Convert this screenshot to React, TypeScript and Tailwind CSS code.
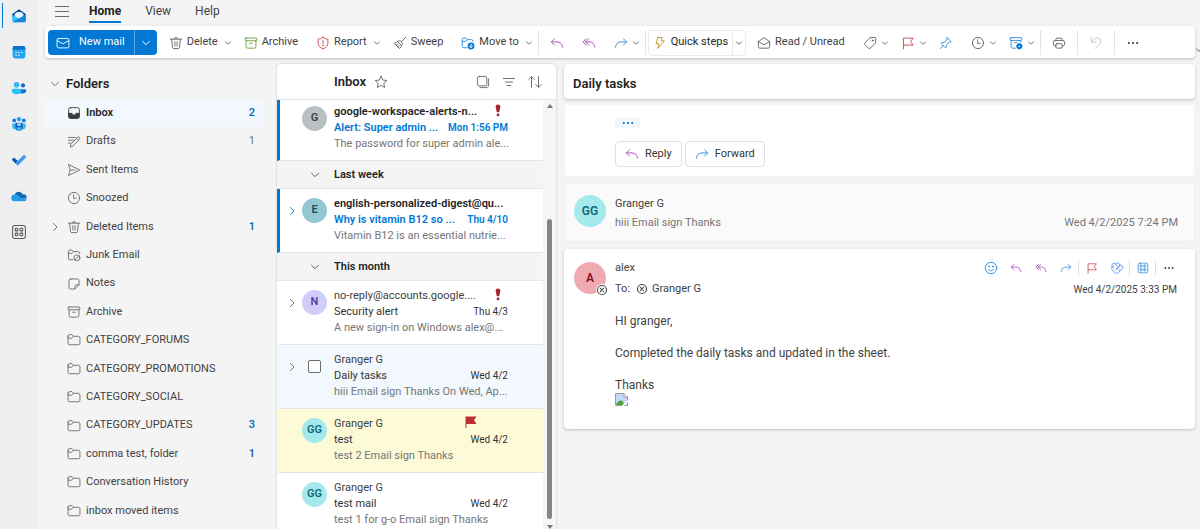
import type { ReactNode } from 'react';
import clsx from 'clsx';

type IconProps = { className?: string; children?: ReactNode; size?: 'sm' | 'md' | 'lg' };

// Outline icons share a 20x20 grid and take their colour from the text
const Icon = ({ className, children, size = 'md' }: IconProps) => (
    <svg
        viewBox="0 0 20 20"
        fill="none"
        stroke="currentColor"
        strokeWidth={1.3}
        strokeLinecap="round"
        strokeLinejoin="round"
        aria-hidden="true"
        className={clsx(
            'shrink-0',
            size === 'sm' && 'h-3 w-3',
            size === 'md' && 'h-3.5 w-3.5',
            size === 'lg' && 'h-4 w-4',
            className
        )}
    >
        {children}
    </svg>
);

const Chevron = ({ className }: { className?: string }) => (
    <svg viewBox="0 0 8 8" fill="none" stroke="currentColor" strokeLinecap="round" strokeLinejoin="round" aria-hidden="true" className={clsx('h-2 w-2 shrink-0', className)}>
        <path d="M1.5 2.8 4 5.3l2.5-2.5" />
    </svg>
);

const ChevronRight = ({ className }: { className?: string }) => (
    <svg viewBox="0 0 10 10" fill="none" stroke="currentColor" strokeLinecap="round" strokeLinejoin="round" aria-hidden="true" className={clsx('h-[10px] w-[10px] shrink-0', className)}>
        <path d="m3.5 1.5 3.5 3.5-3.5 3.5" />
    </svg>
);

const ChevronDown = ({ className }: { className?: string }) => (
    <svg viewBox="0 0 10 10" fill="none" stroke="currentColor" strokeLinecap="round" strokeLinejoin="round" aria-hidden="true" className={clsx('h-[10px] w-[10px] shrink-0', className)}>
        <path d="m1.5 3.2 3.5 3.5 3.5-3.5" />
    </svg>
);

const icons = {
    mail: <><rect x="1.5" y="3.5" width="17" height="13.5" rx="2.2" /><path d="m1.8 6.8 8.2 4.400 8.200-4.400" /></>,
    trash: <path d="M2 4.5h16M7.8 4.3a2.2 2.2 0 0 1 4.4 0M3.8 4.7l1.2 11.6A2 2 0 0 0 7 18h6a2 2 0 0 0 2-1.7l1.2-11.6M8.4 8v6.3M11.6 8v6.3" />,
    archive: <><rect x="1.8" y="2.8" width="16.4" height="4" rx="1" /><path d="M3 6.8v8.4a2.2 2.2 0 0 0 2.2 2.2h9.600a2.200 2.200 0 0 0 2.200-2.200V6.800M8 10.300h4" /></>,
    report: <><path d="M10 1.800c2 1.600 4.400 2.500 7 2.600v5.400c0 4-2.600 6.900-7 8.500-4.400-1.600-7-4.500-7-8.500V4.400c2.600-.1 5-1 7-2.600ZM10 6v5" /><circle cx="10" cy="13.600" r=".5" fill="currentColor" /></>,
    sweep: <path d="m18.300 1.700-6 6M6.500 7.800c2-1.400 4.200-1.400 5.700.1s1.600 3.800.1 5.800c-.9 1.500-1.700 2.700-2.600 4.300L2 10.400c1.800-.6 3-1.500 4.500-2.600Zm0 0 5.800 5.900M4.700 13.100l2-1M7.200 15.600l1.400-1.500" />,
    moveTo: <><path d="M8.500 16.800H4A2.200 2.200 0 0 1 1.800 14.600V5A2.200 2.200 0 0 1 4 2.800h3l2.400 2.400H15A2.200 2.200 0 0 1 17.200 7.400V8M1.800 7.700h4.600L9.400 5.200" /><circle cx="14.300" cy="14.300" r="4.900" fill="#0078d4" stroke="none" /><path d="M14.300 11.800v4.600m-2-2 2 2 2-2" stroke="#fff" /></>,
    reply: <path d="M6.500 4 2 8.500 6.500 13M2.300 8.500H10c4.500 0 7.300 2.600 8 7.500" />,
    replyAll: <path d="M9.500 4 5 8.500 9.500 13M6 4 1.500 8.500 6 13M5.300 8.500H11c4 0 6.600 2.600 7.300 7.500" />,
    forward: <path d="M13.500 4 18 8.500 13.500 13M17.700 8.500H10c-4.500 0-7.300 2.600-8 7.500" />,
    bolt: <path d="M7 2h6.500l-2 5h4.800L6.500 18l2-7H4.300L7 2Z" />,
    openMail: <path d="m2 8 8-5.700L18 8v7.200a2.200 2.200 0 0 1-2.200 2.200H4.200A2.200 2.200 0 0 1 2 15.200V8Zm.3.300L10 12.500l7.700-4.200" />,
    tag: <><path d="M10.800 2.400 17 2a1.400 1.400 0 0 1 1.400 1.400l-.6 6.200a2 2 0 0 1-.6 1.200l-6.600 6.600a2 2 0 0 1-2.800 0l-5-5a2 2 0 0 1 0-2.800L9.500 3a2 2 0 0 1 1.300-.6Z" /><circle cx="14" cy="6.300" r=".8" /></>,
    flag: <path d="M3.500 18.500V3h13.800l-3.600 5 3.600 5H3.500" />,
    pin: <path d="m11.800 2.500 5.700 5.700-1 1-2-.2-3.700 3.400-.4 3.600-1 1-6.400-6.400 1-1 3.600-.4L11 5.500l-.2-2 1-1ZM6.200 13.800 2 18" />,
    clock: <><circle cx="10" cy="10" r="8" /><path d="M9.500 5.500v5H13" /></>,
    archiveGear: <><rect x="1.800" y="2.300" width="16.400" height="4" rx=".8" /><path d="M3 6.300v8.900a2.200 2.200 0 0 0 2.200 2.200H9M17 6.300V8.500M8 9.300h3" /><circle cx="14.800" cy="14.600" r="3.200" fill="#0078d4" stroke="#0078d4" strokeDasharray="1.900 1.400" strokeWidth="2.400" /><circle cx="14.800" cy="14.600" r="1.200" fill="#fff" stroke="none" /></>,
    print: <><path d="M5.500 6.500V4.800A1.800 1.800 0 0 1 7.300 3h5.400a1.800 1.800 0 0 1 1.800 1.800v1.700M5.500 14H4a2 2 0 0 1-2-2V8.800a2.300 2.300 0 0 1 2.300-2.300h11.400A2.300 2.300 0 0 1 18 8.800V12a2 2 0 0 1-2 2h-1.500" /><rect x="5.500" y="11" width="9" height="6.300" rx="1.600" /></>,
    undo: <path d="M3.500 2.500v6.300h6.300M3.800 8.500l4.400-4.300a5 5 0 0 1 7.200 7L9 17.800" />,
    inbox: <><rect x="2.300" y="2.300" width="15.400" height="15.400" rx="2.800" /><path d="M2.500 10.500h4.700c.3 1.500 1.300 2.500 2.800 2.500s2.500-1 2.800-2.500h4.700v4.300a2.700 2.700 0 0 1-2.700 2.700H5.200a2.700 2.700 0 0 1-2.700-2.700v-4.300Z" fill="currentColor" /></>,
    drafts: <path d="M2 3.500h10M2 7.500h7.500M2 11.500h4M15 3.300a1.900 1.900 0 0 1 2.800 2.700L8.500 15.700l-4 1.500 1.300-4.200L15 3.300ZM13.500 5l2.700 2.600" />,
    send: <path d="M2.200 2.200 18.300 10 2.200 17.800 4.500 10 2.200 2.200ZM4.700 10h7" />,
    junk: <><path d="M8.500 16.800H4.200A2.200 2.200 0 0 1 2 14.600V5a2.200 2.200 0 0 1 2.200-2.200h2.900l2.400 2.400h6.300A2.200 2.200 0 0 1 18 7.400V8M2 7.700h4.600l2.900-2.500" /><circle cx="14.200" cy="14" r="4.300" /><path d="m11.300 17 5.900-5.900" /></>,
    note: <path d="M5.300 2.800h9.400a2.500 2.500 0 0 1 2.500 2.500v5.900L11.200 17.200H5.300a2.500 2.500 0 0 1-2.500-2.500V5.300a2.500 2.500 0 0 1 2.500-2.500Zm5.900 14.200v-3.300a2.500 2.500 0 0 1 2.500-2.500H17" />,
    folder: <path d="M1.500 4.500a2.200 2.200 0 0 1 2.200-2.200h3.400l2.400 2.400h6.800a2.200 2.200 0 0 1 2.200 2.200v7.700a2.200 2.200 0 0 1-2.200 2.200H3.700a2.200 2.200 0 0 1-2.200-2.200V4.500Zm0 2.900h5.100l2.900-2.700" />,
    star: <path d="m10 1.800 2.500 5.400 5.800.7-4.300 4 1.200 5.900L10 14.900l-5.200 2.900L6 11.900l-4.300-4 5.800-.7L10 1.800Z" />,
    select: <><rect x="2" y="2" width="13.500" height="13.500" rx="2.800" /><path d="M18 5.500v8.700a3.800 3.800 0 0 1-3.800 3.800H5.500" /></>,
    filter: <path d="M2 5h16M5 10h10M7.500 15h5" />,
    sort: <path d="M5 17.500V2.500M1 6.500l4-4 4 4M15 2.500v15M11 13.500l4 4 4-4" />,
    smile: <><circle cx="10" cy="10" r="8.200" /><path d="M6.300 12c1 1.400 2.200 2 3.700 2s2.700-.6 3.700-2" /><circle cx="7.200" cy="7.800" r=".8" fill="currentColor" /><circle cx="12.800" cy="7.800" r=".8" fill="currentColor" /></>,
    loop: <path d="m5.500 10.500-2-2a3 3 0 0 1 0-4.200 3 3 0 0 1 4.200 0l5.300 5.300M7.500 5 9 3.300a3 3 0 0 1 4.200 4.200L8 12.700M13.300 6.700a3 3 0 0 1 4.300 4.300l-6 6a3 3 0 0 1-4.200 0l-4.500-4.500a3 3 0 0 1 2-5M10 10l3.500 3.500" />,
    appGrid: <><rect x="2" y="2" width="16" height="16" rx="2.600" /><rect x="5.300" y="5.300" width="3.300" height="3.300" rx=".6" /><rect x="11.400" y="5.300" width="3.300" height="3.300" rx=".6" /><rect x="5.300" y="11.400" width="3.300" height="3.300" rx=".6" /><rect x="11.400" y="11.400" width="3.300" height="3.300" rx=".6" /></>,
    dots: <g fill="currentColor" stroke="none"><circle cx="4" cy="10" r="1.500" /><circle cx="10" cy="10" r="1.500" /><circle cx="16" cy="10" r="1.500" /></g>,
    presence: <><circle cx="10" cy="10" r="7.500" strokeWidth="2" /><path d="m7.300 7.300 5.400 5.400m0-5.400-5.400 5.400" strokeWidth="2.200" /></>,
};

type IconName = keyof typeof icons;

// ---- App rail ----

const railApps: { label: string; art: ReactNode }[] = [
    {
        label: 'Mail',
        art: (
            <>
                <path d="M1.500 7.500 10 1.500l8.500 6v4h-17v-4Z" fill="#0a4a9c" />
                <path d="m4.500 7.500 3-2.500h5l3 2.500v5h-11z" fill="#e8f4ff" />
                <path d="M1.500 8.300 10 13l8.500-4.700v7.200a2.300 2.300 0 0 1-2.300 2.300H3.800a2.300 2.300 0 0 1-2.300-2.300V8.300Z" fill="#35c3f5" />
                <path d="M18.500 8.300v7.200a2.300 2.300 0 0 1-2.300 2.300H3.800c-.6 0-1.100-.2-1.500-.6l16.200-8.900Z" fill="#1683de" />
            </>
        ),
    },
    {
        label: 'Calendar',
        art: (
            <>
                <rect x="2" y="2.500" width="16" height="15.500" rx="3" fill="#22a5f1" />
                <path d="M5 2.500h10a3 3 0 0 1 3 3v1.300H2V5.500a3 3 0 0 1 3-3Z" fill="#0f6cc9" />
                <g fill="#fff"><circle cx="6.300" cy="10.500" r=".9" /><circle cx="10" cy="10.500" r=".9" /><circle cx="13.700" cy="10.500" r=".9" /><circle cx="6.300" cy="14" r=".9" /><circle cx="10" cy="14" r=".9" /></g>
            </>
        ),
    },
    {
        label: 'People',
        art: (
            <>
                <circle cx="7" cy="6" r="3.500" fill="#33b6f4" />
                <circle cx="15" cy="6.800" r="2.600" fill="#0f6cc9" />
                <path d="M11 11.500h6.500A1.500 1.500 0 0 1 19 13c0 2.300-1.700 3.800-4.200 3.800H11v-5.300Z" fill="#0f78d4" />
                <path d="M3 11h8a2 2 0 0 1 2 2c0 3-2.300 4.700-6 4.700S1 16 1 13a2 2 0 0 1 2-2Z" fill="#2fbdf3" />
            </>
        ),
    },
    {
        label: 'Groups',
        art: (
            <>
                <circle cx="4" cy="5.500" r="2.300" fill="#1179d3" /><circle cx="16" cy="5.500" r="2.300" fill="#1179d3" /><circle cx="10" cy="4" r="2.700" fill="#1da1f0" />
                <path d="M1.500 9.500H6v7.300a4.500 4.500 0 0 1-4.500-4V9.500ZM14 9.500h4.500v3.300a4.500 4.500 0 0 1-4.500 4V9.500Z" fill="#35b8f5" />
                <path d="M5.500 8.500h9V14a4.500 4.500 0 0 1-9 0V8.500Z" fill="#0d5fbd" />
                <circle cx="10" cy="10.500" r="2.300" fill="#8ad8fb" />
                <path d="M7 14h6v1.500a3 3 0 0 1-6 0V14Z" fill="#35b8f5" />
            </>
        ),
    },
    {
        label: 'To Do',
        art: (
            <>
                <path d="m1 9.700 2.900-2.900 4.800 4.800-2.900 2.900L1 9.700Z" fill="#174fae" />
                <path d="m5.300 14 11-10.600 2.900 2.900L8.500 17.300 5.300 14Z" fill="#3a9cf0" />
            </>
        ),
    },
    {
        label: 'OneDrive',
        art: (
            <>
                <path d="M4.500 8.500A5.600 5.600 0 0 1 14.800 8a4.600 4.600 0 0 1 5 4.300l-6 1L4.500 8.500Z" fill="#1267b4" />
                <path d="M4.800 8.300a4 4 0 0 0-.6 8.300h12a3.700 3.700 0 0 0 3.500-3.300c-2-.8-4.200-.6-5.700.2L8.700 9.500a5 5 0 0 0-3.900-1.200Z" fill="#239cea" />
            </>
        ),
    },
];

const AppRail = () => (
    <nav aria-label="Apps" className="flex w-[39px] shrink-0 flex-col gap-[11px] bg-[#efefef] pt-[3px]">
        {railApps.map((app, index) => (
            <button
                key={app.label}
                aria-label={app.label}
                className={clsx('mx-0.5 flex h-[25px] items-center justify-center border-l pr-0.5', index === 0 ? 'border-[#0078d4]' : 'border-transparent')}
            >
                <svg viewBox="0 0 20 20" className="h-4 w-4" aria-hidden="true">{app.art}</svg>
            </button>
        ))}
        <button aria-label="More apps" className="mx-0.5 flex h-[25px] items-center justify-center pr-px text-[#5c5c5c]">
            <Icon size="lg">{icons.appGrid}</Icon>
        </button>
    </nav>
);

// ---- Ribbon ----

type ToolProps = { icon: IconName; label: string; text?: boolean; menu?: boolean; color?: string };

const Tool = ({ icon, label, text = false, menu = false, color = 'text-[#616161]' }: ToolProps) => (
    <button aria-label={label} className={clsx('flex h-[26px] shrink-0 items-center gap-1 pl-[9px]', menu ? 'pr-[3px]' : 'pr-[9px]')}>
        <Icon className={color}>{icons[icon]}</Icon>
        {text && <span>{label}</span>}
        {menu && <Chevron className={clsx('text-[#767676]', text && 'ml-0.5')} />}
    </button>
);

const Divider = () => <span className="mx-0.5 h-[25px] w-px shrink-0 bg-[#e4e4e4]" />;

const Ribbon = () => (
    <header>
        <div className="flex h-[23px] items-center gap-6 pl-4 text-xs">
            <button aria-label="Navigation" className="-mr-1 text-[#6b6b6b]">
                <svg viewBox="0 0 14 11" className="h-[11px] w-[14px]" stroke="currentColor" aria-hidden="true"><path d="M0 .5h14M0 5.500h14M0 10.500h14" /></svg>
            </button>
            <button className="flex h-full items-center border-b-2 border-[#0078d4] pt-px font-bold text-[#242424]">Home</button>
            <button className="flex h-full items-center border-b-2 border-transparent pt-px">View</button>
            <button className="flex h-full items-center border-b-2 border-transparent pt-px">Help</button>
        </div>
        <div role="toolbar" aria-label="Ribbon" className="relative mt-[3px] mr-[5px] ml-1.5 flex h-8 items-center rounded-sm bg-white px-[3px] pt-px shadow-[0_1px_3px_rgba(0,0,0,0.22)]">
            <div className="mr-[3px] flex h-[25px] shrink-0 rounded-sm bg-[#0078d4] text-white">
                <button className="flex items-center gap-[9px] border-r border-[#5aa9e4] pr-[9px] pl-2">
                    <Icon>{icons.mail}</Icon>
                    New mail
                </button>
                <button aria-label="New mail options" className="flex w-[22px] items-center justify-center">
                    <ChevronDown />
                </button>
            </div>
            <Tool icon="trash" label="Delete" text menu />
            <Tool icon="archive" label="Archive" text color="text-[#6a9f3f]" />
            <Tool icon="report" label="Report" text menu color="text-[#c4454f]" />
            <Tool icon="sweep" label="Sweep" text />
            <Tool icon="moveTo" label="Move to" text menu color="text-[#2b88d8]" />
            <Divider />
            <Tool icon="reply" label="Reply" color="text-[#a846b8]" />
            <Tool icon="replyAll" label="Reply all" color="text-[#a846b8]" />
            <Tool icon="forward" label="Forward" menu color="text-[#2b88d8]" />
            <Divider />
            <div className="mr-0.5 flex h-[26px] shrink-0 rounded-sm border border-[#ebebeb] text-[#242424]">
                <button className="flex items-center gap-1 border-r border-[#ebebeb] px-1">
                    <Icon className="text-[#b8912a]">{icons.bolt}</Icon>
                    Quick steps
                </button>
                <button aria-label="Quick steps options" className="flex w-3 items-center justify-center text-[#616161]">
                    <Chevron />
                </button>
            </div>
            <Tool icon="openMail" label="Read / Unread" text />
            <Tool icon="tag" label="Categorize" menu />
            <Tool icon="flag" label="Flag" menu color="text-[#c4454f]" />
            <Tool icon="pin" label="Pin" color="text-[#2b88d8]" />
            <Tool icon="clock" label="Snooze" menu />
            <Tool icon="archiveGear" label="Policy" menu color="text-[#2b88d8]" />
            <Divider />
            <Tool icon="print" label="Print" />
            <Divider />
            <Tool icon="undo" label="Undo" color="text-[#c4c4c4]" />
            <Divider />
            <Tool icon="dots" label="More options" color="text-[#333333]" />
            <Chevron className="absolute -right-2 bottom-1 text-[#616161]" />
        </div>
    </header>
);

// ---- Folder pane ----

type Folder = { name: string; icon: IconName; count?: number; muted?: boolean; expandable?: boolean };

const folders: Folder[] = [
    { name: 'Inbox', icon: 'inbox', count: 2 },
    { name: 'Drafts', icon: 'drafts', count: 1, muted: true },
    { name: 'Sent Items', icon: 'send' },
    { name: 'Snoozed', icon: 'clock' },
    { name: 'Deleted Items', icon: 'trash', count: 1, expandable: true },
    { name: 'Junk Email', icon: 'junk' },
    { name: 'Notes', icon: 'note' },
    { name: 'Archive', icon: 'archive' },
    { name: 'CATEGORY_FORUMS', icon: 'folder' },
    { name: 'CATEGORY_PROMOTIONS', icon: 'folder' },
    { name: 'CATEGORY_SOCIAL', icon: 'folder' },
    { name: 'CATEGORY_UPDATES', icon: 'folder', count: 3 },
    { name: 'comma test, folder', icon: 'folder', count: 1 },
    { name: 'Conversation History', icon: 'folder' },
    { name: 'inbox moved items', icon: 'folder' },
];

const FolderPane = () => (
    <nav aria-label="Folders" className="flex w-[218px] shrink-0 flex-col pt-[5px] pb-1">
        <button className="flex h-[30px] shrink-0 items-center gap-1.5 pl-[5px] text-[13px] font-semibold text-[#242424]">
            <ChevronDown className="text-[#767676]" />
            Folders
        </button>
        <ul className="flex min-h-0 flex-1 flex-col">
            {folders.map((folder, index) => (
                <li key={folder.name} className="flex max-h-8 flex-1">
                    <a href="#" className={clsx('flex flex-1 items-center pr-2 pl-[5px]', index === 0 && 'rounded-sm bg-[#f2f8fd] text-[#242424]')}>
                        <span className="flex w-[17px] shrink-0 text-[#767676]">{folder.expandable && <ChevronRight />}</span>
                        <Icon className={index === 0 ? 'text-[#3b3b3b]' : 'text-[#6b6b6b]'}>{icons[folder.icon]}</Icon>
                        <span className={clsx('ml-[5px] flex-1', index === 0 && 'font-semibold')}>{folder.name}</span>
                        {folder.count && (
                            <span className={folder.muted ? 'text-[#767676]' : 'font-semibold text-[#0f6cbd]'}>{folder.count}</span>
                        )}
                    </a>
                </li>
            ))}
        </ul>
    </nav>
);

// ---- Message list ----

type Message = {
    from: string;
    subject: string;
    preview: string;
    date: string;
    initials?: string;
    avatar?: string;
    unread?: boolean;
    expandable?: boolean;
    selected?: boolean;
    flagged?: boolean;
    important?: boolean;
};

const groups: { title?: string; messages: Message[] }[] = [
    {
        messages: [
            { from: 'google-workspace-alerts-n...', subject: 'Alert: Super admin ...', preview: 'The password for super admin ale...', date: 'Mon 1:56 PM', initials: 'G', avatar: 'bg-[#b9c0c4] text-[#3c4043]', unread: true, important: true },
        ],
    },
    {
        title: 'Last week',
        messages: [
            { from: 'english-personalized-digest@qu...', subject: 'Why is vitamin B12 so ...', preview: 'Vitamin B12 is an essential nutrie...', date: 'Thu 4/10', initials: 'E', avatar: 'bg-[#93c7d3] text-[#134e5e]', unread: true, expandable: true },
        ],
    },
    {
        title: 'This month',
        messages: [
            { from: 'no-reply@accounts.google....', subject: 'Security alert', preview: 'A new sign-in on Windows alex@...', date: 'Thu 4/3', initials: 'N', avatar: 'bg-[#d2ccf8] text-[#4f4594]', expandable: true, important: true },
            { from: 'Granger G', subject: 'Daily tasks', preview: 'hiii Email sign Thanks On Wed, Ap...', date: 'Wed 4/2', expandable: true, selected: true },
            { from: 'Granger G', subject: 'test', preview: 'test 2 Email sign Thanks', date: 'Wed 4/2', initials: 'GG', avatar: 'bg-[#a6e9ed] text-[#0b6a75]', flagged: true },
            { from: 'Granger G', subject: 'test mail', preview: 'test 1 for g-o Email sign Thanks', date: 'Wed 4/2', initials: 'GG', avatar: 'bg-[#a6e9ed] text-[#0b6a75]' },
        ],
    },
];

const MessageRow = ({ message }: { message: Message }) => (
    <li
        className={clsx(
            'flex h-16 border-b border-l-[3px] border-b-[#e3e3e3] pt-[7px] pr-[35px]',
            message.unread ? 'border-l-[#0078d4]' : 'border-l-transparent',
            message.selected && 'bg-[#f2f8fd]',
            message.flagged && 'bg-[#fdfad8]',
            !message.selected && !message.flagged && 'bg-white'
        )}
    >
        <span className={clsx('mt-0.5 flex h-[25px] w-[22px] shrink-0 items-center pl-[7px]', message.unread ? 'text-[#2b88d8]' : 'text-[#767676]')}>
            {message.expandable && <ChevronRight />}
        </span>
        <span className={clsx('mt-0.5 mr-[7px] flex h-[25px] w-[25px] shrink-0 items-center justify-center rounded-full text-[11px] font-semibold', message.avatar)}>
            {message.initials ?? (
                <input type="checkbox" aria-label={`Select ${message.subject}`} className="h-[13px] w-[13px] appearance-none rounded-xs border border-[#6b6b6b] bg-white" />
            )}
        </span>
        <div className="min-w-0 flex-1 leading-4 whitespace-nowrap">
            <div className={clsx('flex justify-between', message.unread && 'font-semibold text-[#242424]')}>
                <span>{message.from}</span>
                {message.important && (
                    <svg viewBox="0 0 8 14" className="mr-1.5 h-[13px] w-2 shrink-0" fill="#a4262c" role="img" aria-label="High importance">
                        <path d="M4 .5a2.500 2.500 0 0 1 2.500 2.700L5.300 9H2.700L1.500 3.200A2.500 2.500 0 0 1 4 .5Z" /><circle cx="4" cy="11.800" r="1.500" />
                    </svg>
                )}
                {message.flagged && (
                    <svg viewBox="0 0 12 12" className="mr-[31px] h-3 w-3 shrink-0" fill="#bc2f32" role="img" aria-label="Flagged">
                        <path d="M.5.500h11L9 4.300l2.500 3.700h-10v4h-1V.5Z" />
                    </svg>
                )}
            </div>
            <div className={clsx('flex justify-between', message.unread ? 'font-semibold text-[#0078d4]' : 'text-[#333333]')}>
                <span>{message.subject}</span>
                <span className="text-[10px] leading-[15px]">{message.date}</span>
            </div>
            <p className="text-[#767676]">{message.preview}</p>
        </div>
    </li>
);

const MessageList = () => (
    <section aria-label="Message list" className="ml-3.5 flex w-[279px] shrink-0 flex-col rounded-t-sm bg-white shadow-[0_0_2px_rgba(0,0,0,0.25)]">
        <div className="flex h-9 shrink-0 items-center border-b border-[#e3e3e3] pr-3.5 pl-[57px] text-[#616161]">
            <h2 className="mr-2 text-[13px] font-semibold text-[#242424]">Inbox</h2>
            <button aria-label="Add to favorites"><Icon>{icons.star}</Icon></button>
            <div className="ml-auto flex gap-3">
                <button aria-label="Select"><Icon>{icons.select}</Icon></button>
                <button aria-label="Filter"><Icon>{icons.filter}</Icon></button>
                <button aria-label="Sort"><Icon>{icons.sort}</Icon></button>
            </div>
        </div>
        <div className="flex min-h-0 flex-1">
            <div className="min-w-0 flex-1 overflow-hidden bg-[#f4f4f4]">
                <div className="-mt-[3px]">
                    {groups.map((group) => (
                        <div key={group.title ?? 'recent'}>
                            {group.title && (
                                <button className="flex h-7 w-full items-center gap-3.5 border-b border-[#e8e8e8] pt-px pl-[33px] font-semibold text-[#242424]">
                                    <ChevronDown className="text-[#616161]" />
                                    {group.title}
                                </button>
                            )}
                            <ul>
                                {group.messages.map((message) => <MessageRow key={message.subject} message={message} />)}
                            </ul>
                        </div>
                    ))}
                </div>
            </div>
            {/* Scroll track */}
            <div className="flex w-[13px] shrink-0 flex-col items-center bg-[#f6f6f6] pt-1">
                <svg viewBox="0 0 6 4" className="h-1 w-1.5" fill="#767676" aria-hidden="true"><path d="M3 0 6 4H0z" /></svg>
                <div className="flex w-full flex-1 items-end justify-center pb-1.5">
                    <div className="h-[73%] w-[5px] rounded-full bg-[#858585]" />
                </div>
                <svg viewBox="0 0 6 4" className="h-1 w-1.5" fill="#767676" aria-hidden="true"><path d="M3 4 6 0H0z" /></svg>
            </div>
        </div>
    </section>
);

// ---- Reading pane ----

const SmallDivider = () => <span className="h-3.5 w-px bg-[#dcdcdc]" />;

const MessageAction = ({ icon, label, color, size = 'sm' }: { icon: IconName; label: string; color: string; size?: IconProps['size'] }) => (
    <button aria-label={label} className={clsx('flex h-4 w-[25px] items-center justify-center', color)}>
        <Icon size={size}>{icons[icon]}</Icon>
    </button>
);

const ReadingPane = () => (
    <main className="mr-[5px] ml-2 flex min-w-0 flex-1 flex-col">
        <h1 className="flex h-[35px] shrink-0 items-center rounded-sm bg-white pt-1 pl-[9px] text-[13px] font-semibold text-[#242424] shadow-[0_1px_3px_rgba(0,0,0,0.22)]">
            Daily tasks
        </h1>
        <section className="mx-px mt-1.5 rounded-b-sm bg-white pt-[13px] pb-[9px] pl-[50px]">
            <button aria-label="Show message history" className="flex h-[10px] w-[25px] items-center justify-center bg-[#f0f7fd] text-[#0f6cbd]">
                <Icon>{icons.dots}</Icon>
            </button>
            <div className="mt-[13px] flex gap-[3px] text-[#333333]">
                <button className="flex h-[26px] items-center gap-1.5 rounded-sm border border-[#e0e0e0] px-[9px]">
                    <Icon className="text-[#a846b8]">{icons.reply}</Icon>
                    Reply
                </button>
                <button className="flex h-[26px] items-center gap-1.5 rounded-sm border border-[#e0e0e0] px-[9px]">
                    <Icon className="text-[#2b88d8]">{icons.forward}</Icon>
                    Forward
                </button>
            </div>
        </section>
        <section className="mx-px mt-[7px] flex rounded-sm bg-[#fafafa] px-[9px] pt-3 pb-2 shadow-[0_0_1px_rgba(0,0,0,0.2)]">
            <span className="mr-[9px] flex h-8 w-8 shrink-0 items-center justify-center rounded-full bg-[#a6e9ed] text-xs font-semibold text-[#0b6a75]">GG</span>
            <div className="flex-1">
                <h3 className="leading-[18px]">Granger G</h3>
                <div className="flex justify-between pr-[7px] leading-5 text-[#767676]">
                    <p>hiii Email sign Thanks</p>
                    <time>Wed 4/2/2025 7:24 PM</time>
                </div>
            </div>
        </section>
        <article className="mt-2 flex rounded-sm bg-white pt-[11px] pr-2 pb-[23px] pl-2.5 shadow-[0_1px_3px_rgba(0,0,0,0.22)]">
            <div className="relative mt-0.5 mr-[9px] h-8 w-8 shrink-0">
                <span className="flex h-8 w-8 items-center justify-center rounded-full bg-[#efabb1] text-xs font-semibold text-[#7c1220]">A</span>
                <span className="absolute -right-0.5 -bottom-0.5 flex rounded-full bg-white text-[#505050]"><Icon size="sm">{icons.presence}</Icon></span>
            </div>
            <div className="min-w-0 flex-1">
                <div className="flex h-4 justify-between">
                    <h3 className="leading-4">alex</h3>
                    <div className="mr-1.5 flex items-center">
                        <MessageAction icon="smile" label="React" color="text-[#2b88d8]" size="md" />
                        <MessageAction icon="reply" label="Reply to sender" color="text-[#a846b8]" />
                        <MessageAction icon="replyAll" label="Reply to everyone" color="text-[#a846b8]" />
                        <MessageAction icon="forward" label="Forward message" color="text-[#2b88d8]" />
                        <SmallDivider />
                        <MessageAction icon="flag" label="Flag message" color="text-[#c4454f]" />
                        <MessageAction icon="loop" label="Add to Loop" color="text-[#5b8def]" size="md" />
                        <SmallDivider />
                        <MessageAction icon="appGrid" label="Message apps" color="text-[#2b88d8]" />
                        <SmallDivider />
                        <MessageAction icon="dots" label="More actions" color="text-[#333333]" />
                    </div>
                </div>
                <div className="mt-[5px] flex h-4 items-center justify-between">
                    <p className="flex items-center gap-1">
                        <span className="mr-0.5">To:</span>
                        <Icon size="sm" className="text-[#505050]">{icons.presence}</Icon>
                        Granger G
                    </p>
                    <time className="pr-[10px] text-[10px]">Wed 4/2/2025 3:33 PM</time>
                </div>
                <div className="mt-4 flex flex-col gap-4 text-xs leading-4">
                    <p>HI granger,</p>
                    <p>Completed the daily tasks and updated in the sheet.</p>
                    <div>
                        <p>Thanks</p>
                        <svg viewBox="0 0 13 13" className="h-[13px] w-[13px]" role="img" aria-label="Missing image">
                            <path d="M.5.500h8.500l3.500 3.500v8.500H.5z" fill="#c3d9f7" stroke="#9a9a9a" />
                            <path d="M9 .5V4h3.500" fill="#fff" stroke="#9a9a9a" />
                            <path d="M1 12c1-3 3-4.500 5-4.500S8.500 9 9 12z" fill="#4ea63b" />
                            <path d="m6.500 13 6.500-6v2l-4 4z" fill="#fff" />
                        </svg>
                    </div>
                </div>
            </div>
        </article>
    </main>
);

const App = () => (
    <div className="flex h-screen overflow-hidden bg-[#f4f4f4] font-['Segoe_UI','Roboto',sans-serif] text-[11px] text-[#424242]">
        <AppRail />
        <div className="flex min-w-0 flex-1 flex-col">
            <Ribbon />
            <div className="mt-1.5 ml-1.5 flex min-h-0 flex-1">
                <FolderPane />
                <MessageList />
                <ReadingPane />
            </div>
        </div>
    </div>
);

export default App;
